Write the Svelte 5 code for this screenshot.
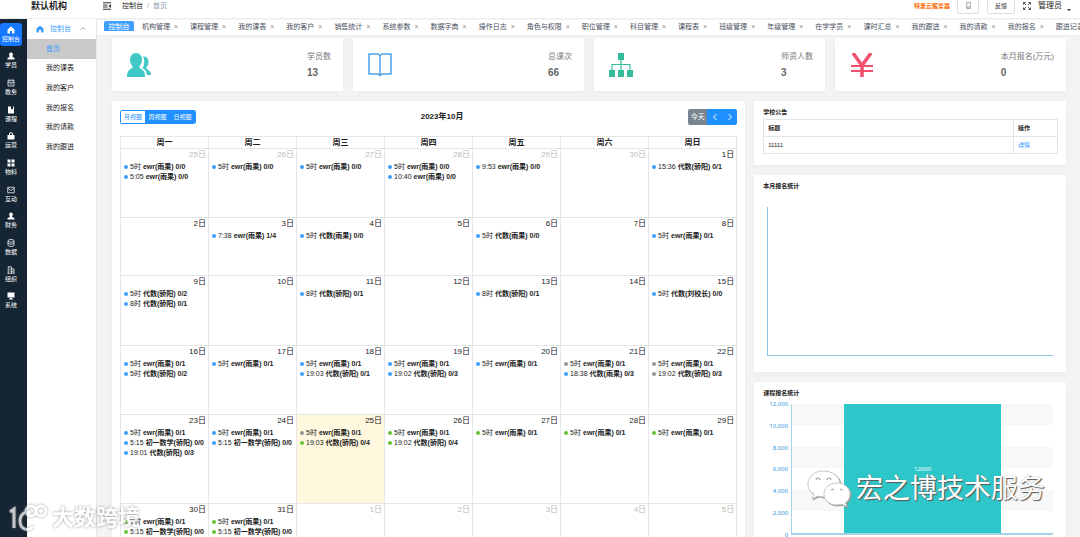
<script>
    const modules = [
        { name: "控制台", icon: "M8 1 1 7v8h5v-5h4v5h5V7z" },
        { name: "学员", icon: "M8 1a4 4 0 0 1 3 6.500c0 1-.5 2 .5 2.500L15 12v3H1v-3l3.500-2c1-.5.5-1.500.5-2.500A4 4 0 0 1 8 1z" },
        { name: "教务", icon: "M2 2.500h12v11.500H2zM2 6.500h12M4.500 1v2M11.500 1v2M5 10h6", line: true },
        { name: "课程", icon: "M2 1h6v6l2-1.500L12 7V1h2v14H2z" },
        { name: "运营", icon: "M1 6h3V4.500a4 4 0 0 1 8 0V6h3v9H1zM6 6h4V4.500a2 2 0 0 0-4 0z" },
        { name: "物料", icon: "M1 1h6v6H1zM9 1h6v6H9zM1 9h6v6H1zM9 9h6v6H9z" },
        { name: "互动", icon: "M1.500 2.500h13v11h-13zM1.500 4.500 8 9l6.500-4.500", line: true },
        { name: "财务", icon: "M8 1c2.500 0 3.500 1.500 3.500 4S10 8.500 10 10l5 2v3H1v-3l5-2c0-1.500-1.500-2.500-1.500-5S5.500 1 8 1z" },
        { name: "数据", icon: "M2 4c0-4 12-4 12 0v8c0 4-12 4-12 0zM2 4c0 3 12 3 12 0M2 8c0 3 12 3 12 0", line: true },
        { name: "组织", icon: "M2.500 14.500v-13H9v13M9 6h5v8.500M1 14.500h14M5 4.500h2M5 7.500h2M5 10.500h2M11.500 9v3", line: true },
        { name: "系统", icon: "M1 1h14v10H1zM6 12h4v1.500h2V15H4v-1.500h2z" }
    ];
    const menu = ["首页", "我的课表", "我的客户", "我的报名", "我的请款", "我的跟进"];
    const tabs = ["机构管理", "课程管理", "我的课表", "我的客户", "销售统计", "系统参数", "数据字典", "操作日志", "角色与权限", "职位管理", "科目管理", "课程表", "班级管理", "年级管理", "在学学员", "课时汇总", "我的跟进", "我的请款", "我的报名", "跟进记录"];
    const stats = [
        { label: "学员数", value: "13", icon: "users" },
        { label: "总课次", value: "66", icon: "book" },
        { label: "师资人数", value: "3", icon: "tree" },
        { label: "本月报名(万元)", value: "0", icon: "yen" }
    ];
    const views = ["月视图", "周视图", "日视图"];
    let view = $state("月视图");

    const weekdays = ["周一", "周二", "周三", "周四", "周五", "周六", "周日"];
    // each event: time, title, dot colour (blue when left out)
    const weeks = [
        { height: 69, days: [
            { n: 25, out: true, events: [["5时", "ewr(雨果) 0/0"], ["5:05", "ewr(雨果) 0/0"]] },
            { n: 26, out: true, events: [["5时", "ewr(雨果) 0/0"]] },
            { n: 27, out: true, events: [["5时", "ewr(雨果) 0/0"]] },
            { n: 28, out: true, events: [["5时", "ewr(雨果) 0/0"], ["10:40", "ewr(雨果) 0/0"]] },
            { n: 29, out: true, events: [["9:53", "ewr(雨果) 0/0"]] },
            { n: 30, out: true, events: [] },
            { n: 1, events: [["15:36", "代数(骄阳) 0/1"]] }
        ] },
        { height: 58, days: [
            { n: 2, events: [] },
            { n: 3, events: [["7:38", "ewr(雨果) 1/4"]] },
            { n: 4, events: [["5时", "代数(雨果) 0/0"]] },
            { n: 5, events: [] },
            { n: 6, events: [["5时", "代数(雨果) 0/0"]] },
            { n: 7, events: [] },
            { n: 8, events: [["5时", "ewr(雨果) 0/1"]] }
        ] },
        { height: 70, days: [
            { n: 9, events: [["5时", "代数(骄阳) 0/2"], ["8时", "代数(骄阳) 0/1"]] },
            { n: 10, events: [] },
            { n: 11, events: [["8时", "代数(骄阳) 0/1"]] },
            { n: 12, events: [] },
            { n: 13, events: [["8时", "代数(骄阳) 0/1"]] },
            { n: 14, events: [] },
            { n: 15, events: [["5时", "代数(刘校长) 0/0"]] }
        ] },
        { height: 69, days: [
            { n: 16, events: [["5时", "ewr(雨果) 0/1"], ["5时", "代数(骄阳) 0/2"]] },
            { n: 17, events: [["5时", "ewr(雨果) 0/1"]] },
            { n: 18, events: [["5时", "ewr(雨果) 0/1"], ["19:03", "代数(骄阳) 0/1"]] },
            { n: 19, events: [["5时", "ewr(雨果) 0/1"], ["19:02", "代数(骄阳) 0/3"]] },
            { n: 20, events: [["5时", "ewr(雨果) 0/1"]] },
            { n: 21, events: [["5时", "ewr(雨果) 0/1", "grey"], ["18:38", "代数(雨果) 0/3"]] },
            { n: 22, events: [["5时", "ewr(雨果) 0/1", "grey"], ["19:02", "代数(骄阳) 0/3", "grey"]] }
        ] },
        { height: 89, days: [
            { n: 23, events: [["5时", "ewr(雨果) 0/1"], ["5:15", "初一数学(骄阳) 0/0"], ["19:01", "代数(骄阳) 0/3"]] },
            { n: 24, events: [["5时", "ewr(雨果) 0/1"], ["5:15", "初一数学(骄阳) 0/0"]] },
            { n: 25, today: true, events: [["5时", "ewr(雨果) 0/1", "grey"], ["19:03", "代数(骄阳) 0/4", "green"]] },
            { n: 26, events: [["5时", "ewr(雨果) 0/1", "green"], ["19:02", "代数(骄阳) 0/4", "green"]] },
            { n: 27, events: [["5时", "ewr(雨果) 0/1", "green"]] },
            { n: 28, events: [["5时", "ewr(雨果) 0/1", "green"]] },
            { n: 29, events: [["5时", "ewr(雨果) 0/1", "green"]] }
        ] },
        { height: 69, days: [
            { n: 30, events: [["5时", "ewr(雨果) 0/1", "green"], ["5:15", "初一数学(骄阳) 0/0", "green"]] },
            { n: 31, events: [["5时", "ewr(雨果) 0/1", "green"], ["5:15", "初一数学(骄阳) 0/0", "green"]] },
            { n: 1, out: true, events: [] },
            { n: 2, out: true, events: [] },
            { n: 3, out: true, events: [] },
            { n: 4, out: true, events: [] },
            { n: 5, out: true, events: [] }
        ] }
    ];
    const ticks = ["12,000", "10,000", "8,000", "6,000", "4,000", "2,000", "0"];
    const total = 12000;
</script>

<div class="page">
    <header class="topbar">
        <strong class="org">默认机构</strong>
        <button class="plain" aria-label="折叠菜单">
            <svg class="fold" viewBox="0 0 16 16"><path d="M0 1.500h16M0 6h9M0 10h9M0 14.500h16" stroke="#333" stroke-width="2" /><path d="M16 4v8l-5-4z" fill="#333" /></svg>
        </button>
        <nav class="crumbs"><a href="#console">控制台</a><i>/</i><span>首页</span></nav>
        <a class="promo" href="#cloud">特惠云服务器</a>
        <button class="box phone" aria-label="手机端">
            <svg viewBox="0 0 16 16"><path d="M4 1h8v14H4zM4 11.500h8" fill="none" stroke="#777" stroke-width="1.500" /></svg>
        </button>
        <button class="box">反馈</button>
        <button class="plain full" aria-label="全屏">
            <svg viewBox="0 0 16 16"><path d="M1 5V1h4M1 1l5 5M11 1h4v4M15 1l-5 5M1 11v4h4M1 15l5-5M15 11v4h-4M15 15l-5-5" fill="none" stroke="#555" stroke-width="2" /></svg>
        </button>
        <button class="plain user">管理员<i></i></button>
    </header>

    <div class="body">
        <nav class="rail">
            <div class="modules">
                {#each modules as m, i}
                    <a href="#m{i}" class:active={i === 0}>
                        <svg viewBox="0 0 16 16" class:line={m.line}><path d={m.icon} fill-rule="evenodd" /></svg>
                        {m.name}
                    </a>
                {/each}
            </div>
        </nav>

        <nav class="menu">
            <button class="plain group">
                <svg viewBox="0 0 16 16"><path d="M8 1 1 7v8h5v-5h4v5h5V7z" fill="#409eff" /></svg>
                <span>控制台</span>
                <svg class="up" viewBox="0 0 8 8"><path d="M1 5l3-3 3 3" fill="none" stroke="#888" /></svg>
            </button>
            <div class="items">
                {#each menu as item, i}
                    <a href="#p{i}" class:active={i === 0}>{item}</a>
                {/each}
            </div>
        </nav>

        <main>
            <div class="tabs">
                <a href="#console" class="current">控制台</a>
                {#each tabs as tab}
                    <span class="tab"><a href="#tab">{tab}</a><button class="plain" aria-label="关闭">×</button></span>
                {/each}
            </div>

            <div class="content">
                <div class="stats">
                    {#each stats as s}
                        <section class="card stat">
                            <svg viewBox="0 0 24 24">
                                {#if s.icon === "users"}
                                    <path fill="#3fc8c5" d="M9 0c4 0 6 3 6 6.500 0 3-1 5-2.500 6.500-.5 1.500 0 2 1 2.500 3 1.500 4.500 3 4.500 8.500H0c0-5 1.500-7 4.500-8.500 1-.5 1.500-1 1-2.500C4 11.500 3 9.500 3 6.500 3 3 5 0 9 0z" />
                                    <path fill="#3fc8c5" d="M16 3.500c3-.5 5.500 1.500 5.500 5 0 2.500-.5 4-2 5.500-.5 1 0 1.500.5 2 2.500 1.500 4 3 4 6h-4c-.5-3.500-2-5.500-4.500-7 2-2.500 2.500-8 .5-11.500z" />
                                {:else if s.icon === "book"}
                                    <path fill="none" stroke="#4ba3ea" stroke-width="1.500" d="M1 1h9l2 1.500L14 1h9v20h-9l-2 1.500-2-1.500H1zM12 2.500v20" />
                                {:else if s.icon === "tree"}
                                    <path fill="#35bc9b" d="M9 0h6v7H9zM0 17h6v7H0zM9 17h6v7H9zM18 17h6v7h-6z" />
                                    <path fill="none" stroke="#35bc9b" stroke-width="1.200" d="M12 7v10M3 17v-5.500h18V17" />
                                {:else}
                                    <path fill="none" stroke="#f0506e" stroke-width="3.500" d="M3 0l9 12.500L21 0M12 12v12" />
                                    <path stroke="#f0506e" stroke-width="2" d="M1 13h22M1 18h22" />
                                {/if}
                            </svg>
                            <p>{s.label}<b>{s.value}</b></p>
                        </section>
                    {/each}
                </div>

                <div class="columns">
                    <section class="card calendar">
                        <div class="toolbar">
                            <div class="views">
                                {#each views as v}
                                    <button class:on={view === v} onclick={() => (view = v)}>{v}</button>
                                {/each}
                            </div>
                            <h2>2023年10月</h2>
                            <div class="pager">
                                <button class="now">今天</button>
                                <button aria-label="上个月"><svg viewBox="0 0 8 8"><path d="M5.500 1 2.500 4l3 3" /></svg></button>
                                <button aria-label="下个月"><svg viewBox="0 0 8 8"><path d="M2.500 1l3 3-3 3" /></svg></button>
                            </div>
                        </div>
                        <table class="month">
                            <thead>
                                <tr>{#each weekdays as d}<th>{d}</th>{/each}</tr>
                            </thead>
                            <tbody>
                                {#each weeks as week}
                                    <tr style="height: {week.height}px">
                                        {#each week.days as day}
                                            <td class:out={day.out} class:today={day.today}>
                                                <div class="num">{day.n}日</div>
                                                {#each day.events as [time, title, color]}
                                                    <div class="event {color}">{time} <b>{title}</b></div>
                                                {/each}
                                            </td>
                                        {/each}
                                    </tr>
                                {/each}
                            </tbody>
                        </table>
                    </section>

                    <div class="side">
                        <section class="card notice">
                            <h3>学校公告</h3>
                            <table>
                                <thead><tr><th>标题</th><th class="op">操作</th></tr></thead>
                                <tbody><tr><td>11111</td><td><a href="#detail">详情</a></td></tr></tbody>
                            </table>
                        </section>
                        <section class="card signup">
                            <h3>本月报名统计</h3>
                            <div class="empty"></div>
                        </section>
                        <section class="card course">
                            <h3>课程报名统计</h3>
                            <div class="chart">
                                <div class="ticks">
                                    {#each ticks as t}<span>{t}</span>{/each}
                                </div>
                                <div class="plot">
                                    <div class="bar" style="height: {total / 120}%">{total}</div>
                                </div>
                            </div>
                        </section>
                    </div>
                </div>
            </div>
        </main>
    </div>

    <div class="mark left">
        <svg viewBox="0 0 40 28"><path d="M1 8l4-3v19M22 9c-5-3-11 1-11 8 0 9 9 11 13 5M27 7a5 5 0 1 0-10 0 5 5 0 0 0 10 0c0-3 2-5 5-5a5 5 0 1 1-5 5" fill="none" stroke="#fff" stroke-width="3" /></svg>
        大数跨境
    </div>
    <div class="mark right">
        <svg viewBox="0 0 44 37">
            <path d="M16 1C7 1 1 7 1 14c0 5 2 8 6 10l-2 5 6-3c2 .6 4 1 7 1 8 0 15-5 15-13S25 1 16 1z" />
            <path d="M30 13c-8 0-13 5-13 11s5 11 13 11l5-.7 5 2.500-1.500-4c3-2 4.500-5 4.500-9 0-6-6-11-13-11z" />
            <path class="eyes" d="M9 10a2 2 0 0 1 4 0M20 10a2 2 0 0 1 4 0M24 20a2 2 0 0 1 3 0M33 20a2 2 0 0 1 3 0" />
        </svg>
        宏之博技术服务
    </div>
</div>

<style>
    :global(body) {
        background: #f4f4f4;
        overflow: hidden;
    }
    .page {
        position: relative;
        display: flex;
        flex-direction: column;
        height: 100vh;
        overflow: hidden;
        color: #222;
        font: 7px/10px "Liberation Sans", "Noto Sans CJK SC", sans-serif;
    }
    .page * {
        box-sizing: border-box;
    }
    a {
        color: inherit;
        text-decoration: none;
    }
    button {
        padding: 0;
        font: inherit;
        color: inherit;
        cursor: pointer;
    }
    svg {
        display: block;
        flex: none;
    }
    i {
        font-style: normal;
    }
    .plain {
        border: 0;
        background: none;
    }

    .topbar {
        display: flex;
        align-items: center;
        flex: none;
        height: 19px;
        padding: 0 9px 7px 31px;
        background: #fff;
        border-bottom: 1px solid #eee;
    }
    .org {
        width: 72px;
        font-size: 9px;
    }
    .fold {
        width: 8px;
        height: 8px;
    }
    .crumbs {
        margin: 0 auto 0 11px;
    }
    .crumbs i {
        margin: 0 4px;
        color: #aaa;
    }
    .crumbs span {
        color: #8c9cb4;
    }
    .promo {
        margin-right: 7px;
        font-size: 6px;
        font-weight: bold;
        color: #ff6a00;
    }
    .box {
        flex: none;
        width: 28px;
        height: 17px;
        font-size: 6px;
        background: #fff;
        border: 1px solid #ddd;
        border-radius: 2px;
    }
    .phone {
        width: 22px;
        margin-right: 8px;
    }
    .box svg {
        width: 7px;
        height: 7px;
        margin: auto;
    }
    .full {
        margin: 0 7px 0 8px;
    }
    .full svg {
        width: 8px;
        height: 8px;
    }
    .user {
        display: flex;
        align-items: flex-end;
        gap: 5px;
        font-size: 8px;
        white-space: nowrap;
    }
    .user i {
        border: 2px solid transparent;
        border-top-color: #333;
        border-bottom: 0;
    }

    .body {
        display: flex;
        flex: 1;
        min-height: 0;
    }
    .rail {
        flex: none;
        width: 27px;
        padding: 2px 5px 0 0;
        background: #152533;
        color: #fff;
        font-size: 6px;
        line-height: 8px;
    }
    .modules {
        display: grid;
        grid-auto-rows: 1fr;
        height: 293px;
    }
    .modules a {
        display: flex;
        flex-direction: column;
        align-items: center;
        justify-content: center;
        gap: 1px;
        margin: 2px 0;
        border-radius: 3px;
    }
    .modules .active {
        background: #1677ff;
    }
    .modules svg {
        width: 8px;
        height: 8px;
        fill: #fff;
    }
    .modules .line {
        fill: none;
        stroke: #fff;
        stroke-width: 1.5px;
    }
    .menu {
        flex: none;
        width: 70px;
        background: #fff;
        border-right: 1px solid #e4e7ed;
    }
    .group {
        display: flex;
        align-items: center;
        width: 100%;
        height: 20px;
        padding: 0 10px 0 9px;
        color: #409eff;
    }
    .group svg {
        width: 8px;
        height: 8px;
    }
    .group span {
        margin: 0 auto 0 6px;
    }
    .group .up {
        width: 6px;
        height: 6px;
    }
    .items {
        display: grid;
        grid-auto-rows: 1fr;
        height: 118px;
    }
    .items a {
        display: flex;
        align-items: center;
        padding-left: 19px;
    }
    .items .active {
        background: #c9c9c9;
        color: #409eff;
    }

    main {
        flex: 1;
        min-width: 0;
    }
    .tabs {
        display: flex;
        align-items: flex-start;
        gap: 12px;
        height: 17px;
        padding: 1px 0 0 7px;
        overflow: hidden;
        background: #fff;
        border-top: 1px solid #f4f4f4;
        border-bottom: 1px solid #eee;
        white-space: nowrap;
        color: #495060;
    }
    .current {
        flex: none;
        width: 30px;
        height: 10px;
        margin-right: -4px;
        overflow: hidden;
        border-radius: 2px 2px 0 0;
        background: #409eff;
        color: #fff;
        line-height: 12px;
        text-align: center;
    }
    .tab {
        display: flex;
        flex: none;
        gap: 4px;
        line-height: 12px;
    }
    .tab button {
        color: #888;
    }
    .content {
        padding: 2px 14px 0 15px;
    }
    .card {
        background: #fff;
        box-shadow: 0 2px 8px #0000000a;
    }
    .stats {
        display: grid;
        grid-template-columns: repeat(4, 1fr);
        gap: 10px;
        margin-bottom: 10px;
    }
    .stat {
        display: flex;
        align-items: center;
        justify-content: space-between;
        height: 53px;
        padding: 0 12px 0 15px;
    }
    .stat svg {
        width: 24px;
        height: 24px;
    }
    .stat p {
        margin: 0;
        font-size: 8px;
        line-height: 16px;
        color: #777;
    }
    .stat b {
        display: block;
        font-size: 10px;
        color: #666;
    }

    .columns {
        display: grid;
        grid-template-columns: 67fr 33fr;
        gap: 9px;
    }
    .calendar {
        padding: 8px;
    }
    .toolbar {
        display: flex;
        align-items: center;
        justify-content: space-between;
        height: 16px;
        margin-bottom: 11px;
        color: #fff;
    }
    h2 {
        margin: 0;
        font-size: 8px;
        color: #222;
    }
    .views,
    .pager {
        display: flex;
        overflow: hidden;
        border-radius: 2px;
    }
    .views {
        border: 1px solid #1e90ff;
    }
    .views button,
    .pager button {
        border: 0;
        background: #1e90ff;
    }
    .views button {
        width: 25px;
        height: 12px;
        font-size: 6px;
    }
    .views .on {
        width: 24px;
        background: #fff;
        color: #1e90ff;
    }
    .pager button {
        width: 15px;
        height: 16px;
    }
    .pager .now {
        width: 19px;
        background: #788492;
    }
    .pager svg {
        width: 8px;
        height: 8px;
        margin: auto;
        fill: none;
        stroke: #fff;
    }
    table {
        width: 100%;
        border-collapse: collapse;
        table-layout: fixed;
    }
    th,
    td {
        padding: 0;
        border: 1px solid #e4e6e8;
    }
    .month th {
        height: 12px;
        font-size: 8px;
    }
    .month td {
        vertical-align: top;
    }
    .num {
        padding: 1px 2px 2px 0;
        font-size: 8px;
        text-align: right;
    }
    .out .num {
        color: #bbb;
    }
    .today {
        background: #fff8df;
    }
    .event {
        display: flex;
        align-items: center;
        gap: 2px;
        padding-left: 3px;
        overflow: hidden;
        white-space: nowrap;
    }
    .event::before {
        content: "";
        width: 4px;
        height: 4px;
        border-radius: 50%;
        background: #409eff;
    }
    .event.grey::before {
        background: #909399;
    }
    .event.green::before {
        background: #67c23a;
    }

    .side {
        display: flex;
        flex-direction: column;
        gap: 10px;
    }
    .side .card {
        padding: 6px 8px 6px 9px;
    }
    h3 {
        margin: 0;
        font-size: 6px;
    }
    .notice {
        height: 64px;
    }
    .notice table {
        margin-top: 2px;
        font-size: 6px;
        text-align: left;
    }
    .notice th,
    .notice td {
        height: 17px;
        padding-left: 4px;
        border-color: #dfe6ec;
    }
    .notice .op {
        width: 44px;
    }
    .notice a {
        color: #1e90ff;
    }
    .signup {
        height: 197px;
    }
    .empty {
        height: 149px;
        margin: 16px 5px 0 4px;
        border: solid #8cc6e2;
        border-width: 0 0 1px 1px;
    }
    .course {
        flex: 1;
    }
    .chart {
        display: flex;
        gap: 3px;
        height: 131px;
        margin: 6px 5px 0 0;
    }
    .ticks {
        display: flex;
        flex-direction: column;
        justify-content: space-between;
        width: 25px;
        margin: -4px 0;
        font: 6px/8px "Noto Sans", sans-serif;
        text-align: right;
        color: #3398db;
    }
    .plot {
        flex: 1;
        display: flex;
        align-items: flex-end;
        justify-content: center;
        border: solid #a4d3ea;
        border-width: 0 0 2px 1px;
        background: repeating-linear-gradient(#f8f8f8 0 16.66%, #fff 16.66% 33.33%);
    }
    .bar {
        display: flex;
        align-items: center;
        justify-content: center;
        width: 60%;
        background: #2ec7c9;
        color: #fff;
        font: 6px/8px "Noto Sans", sans-serif;
    }

    .mark {
        position: absolute;
        display: flex;
        align-items: center;
        color: #fff;
        pointer-events: none;
        white-space: nowrap;
    }
    .left {
        left: 9px;
        bottom: 4px;
        gap: 3px;
        font-size: 22px;
        font-weight: bold;
        line-height: 30px;
        opacity: 0.75;
        text-shadow: 0 0 3px #777;
    }
    .left svg {
        width: 40px;
        height: 28px;
        filter: drop-shadow(0 0 1px #777);
    }
    .right {
        right: 35px;
        bottom: 30px;
        gap: 5px;
        font-size: 27px;
        line-height: 36px;
        text-shadow: 1px 1px 1px #555, 0 0 1px #888;
    }
    .right svg {
        width: 44px;
        height: 37px;
        fill: #fff;
        stroke: #bbb;
        stroke-width: 0.8px;
        filter: drop-shadow(1px 1px 0 #999);
    }
    .right .eyes {
        stroke: #777;
    }
</style>
